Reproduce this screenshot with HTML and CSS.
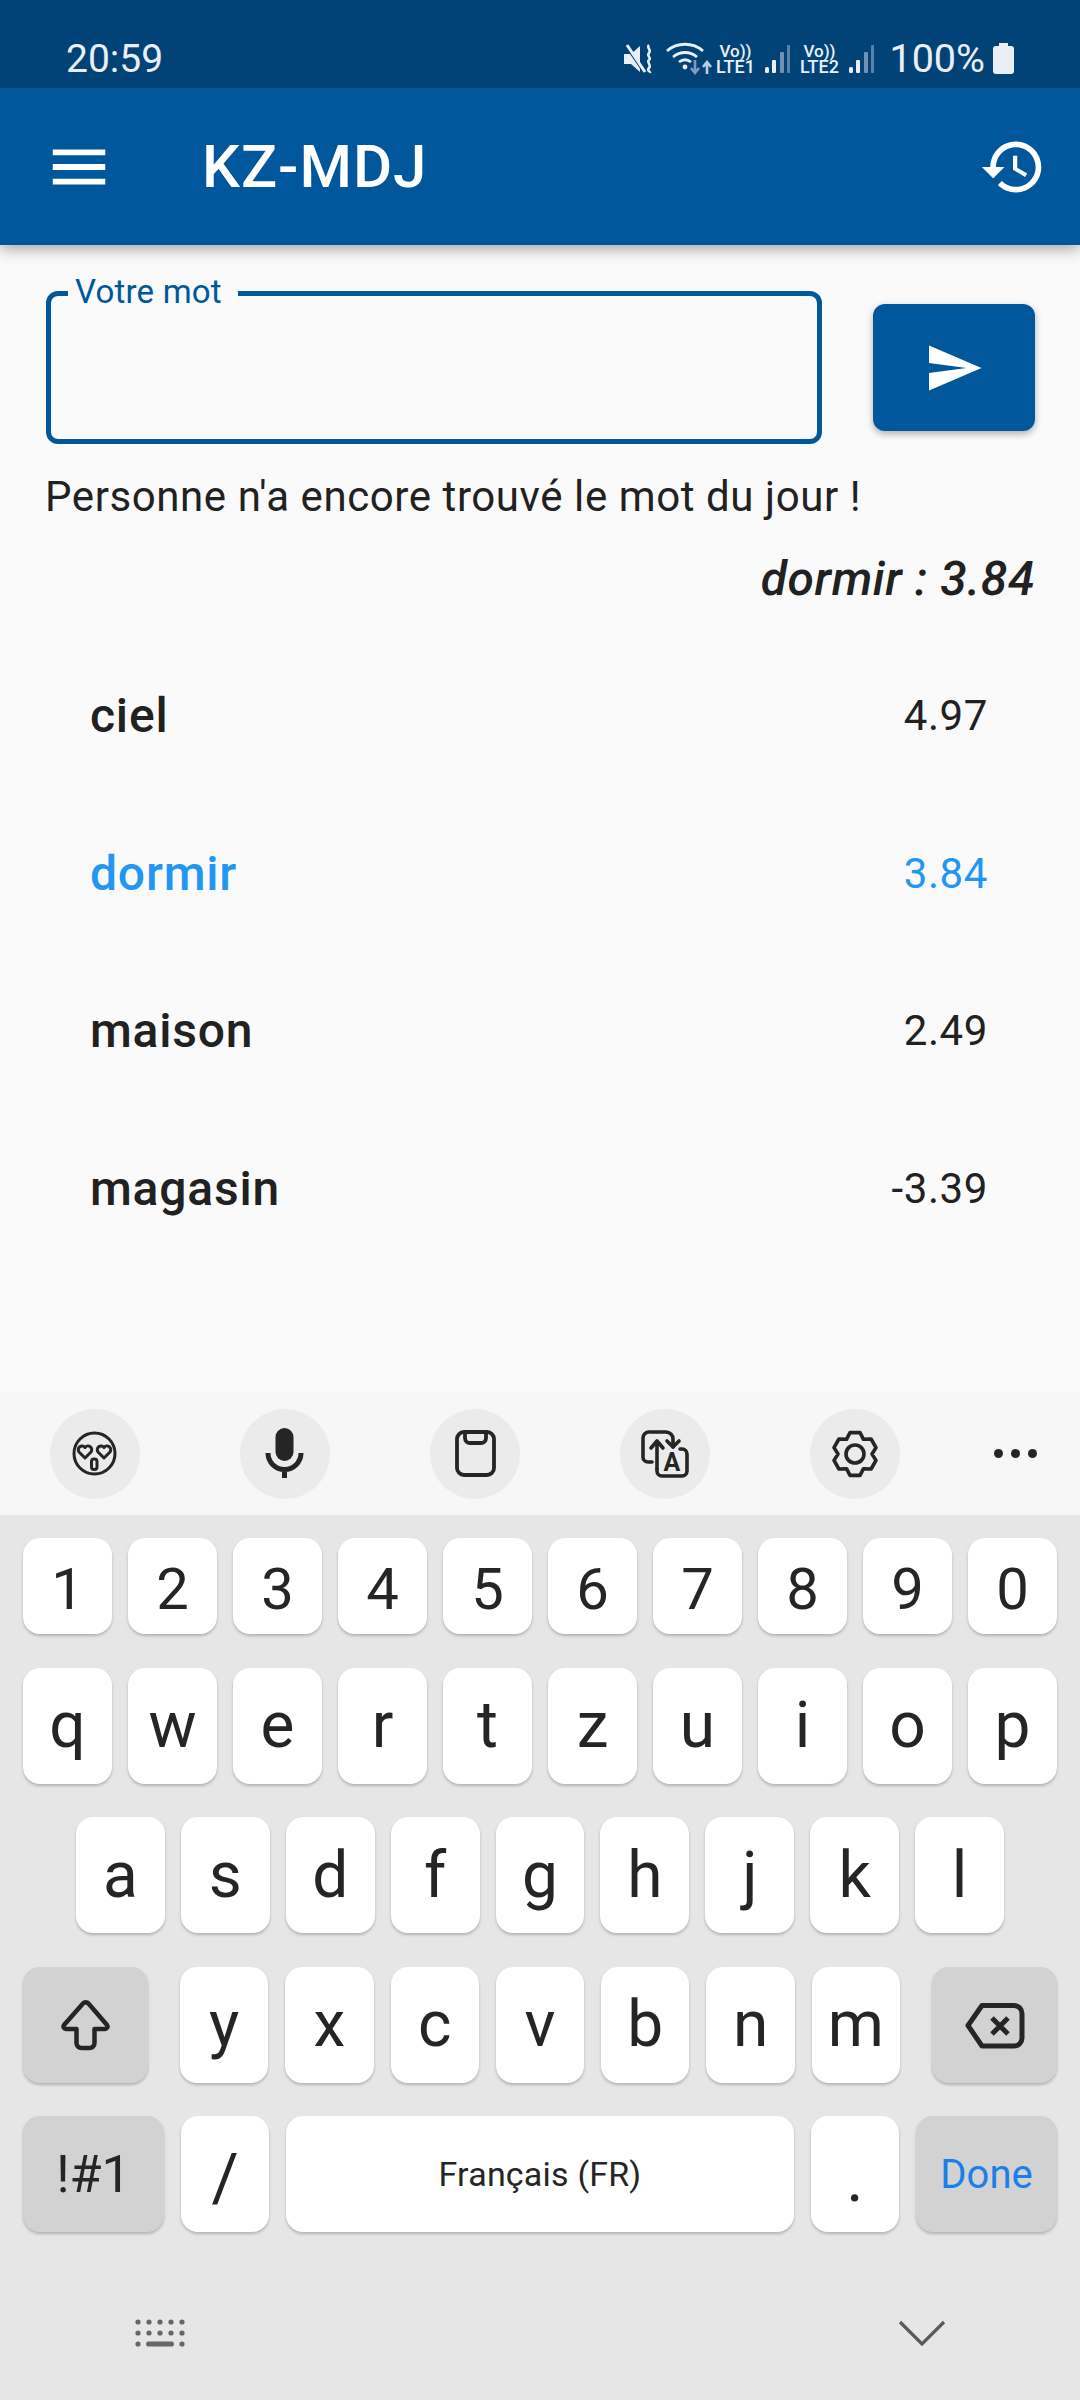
FILE: index.html
```html
<!DOCTYPE html>
<html lang="fr">
<head>
<meta charset="utf-8">
<title>KZ-MDJ</title>
<link rel="stylesheet" href="styles.css">
</head>
<body>
<div class="page">
  <div class="status">
    <span class="time">20:59</span>
    <div class="status-right">
      <svg class="st-mute" width="32" height="32" viewBox="0 0 32 32"><path d="M1 11h7L17 3v26l-9-8H1z" fill="#e9eff4"/><path d="M2 1l19 28" stroke="#014377" stroke-width="3"/><path d="M4 2l18 27" stroke="#e9eff4" stroke-width="3"/><path d="M26 2c-3 3 3 5 0 8s3 5 0 7 3 5 0 8 2 3 1 5" fill="none" stroke="#e9eff4" stroke-width="2.5"/></svg>
      <svg class="st-wifi" width="46" height="34" viewBox="0 0 46 34"><g fill="none" stroke="#e9eff4" stroke-width="2.8"><path d="M1 9c10-9 26-9 36 0"/><path d="M7 15c7-6 17-6 24 0"/></g><path d="M13 20c4-3 8-3 12 0" fill="none" stroke="#e9eff4" stroke-width="2.8"/><circle cx="19" cy="25" r="2.4" fill="#e9eff4"/><path d="M29 18v12m-4-4l4 5 4-5" fill="none" stroke="#7e9ebb" stroke-width="2.6"/><path d="M41 32v-11m-4 4l4-5 4 5" fill="none" stroke="#bccddb" stroke-width="2.6"/></svg>
      <div class="volte"><span class="vo">Vo))</span><span class="lte">LTE1</span></div>
      <svg class="st-sig" width="26" height="30" viewBox="0 0 26 30"><rect x="1" y="23" width="4" height="6" rx="1.5" fill="#e9eff4"/><rect x="8" y="16" width="4" height="13" rx="1" fill="#e9eff4"/><rect x="16" y="8" width="4" height="21" rx="1" fill="#6f93b4"/><rect x="23" y="1" width="3.500" height="28" rx="1" fill="#5b82a6"/></svg>
      <div class="volte"><span class="vo">Vo))</span><span class="lte">LTE2</span></div>
      <svg class="st-sig" width="26" height="30" viewBox="0 0 26 30"><rect x="1" y="23" width="4" height="6" rx="1.5" fill="#e9eff4"/><rect x="8" y="16" width="4" height="13" rx="1" fill="#e9eff4"/><rect x="16" y="8" width="4" height="21" rx="1" fill="#6f93b4"/><rect x="23" y="1" width="3.500" height="28" rx="1" fill="#5b82a6"/></svg>
      <span class="pct">100%</span>
      <svg class="st-bat" width="21" height="31" viewBox="0 0 21 31"><path d="M6 0h9v3h3a3 3 0 0 1 3 3v22a3 3 0 0 1-3 3H3a3 3 0 0 1-3-3V6a3 3 0 0 1 3-3h3z" fill="#e9eff4"/></svg>
    </div>
  </div>

  <header class="appbar">
    <svg class="ic-menu" width="70" height="70" viewBox="0 0 24 24"><path d="M3 18h18v-2H3v2zm0-5h18v-2H3v2zm0-7v2h18V6H3z" fill="#fff"/></svg>
    <h1 class="title">KZ-MDJ</h1>
    <svg class="ic-history" width="68" height="68" viewBox="0 0 24 24"><path d="M13 3c-4.97 0-9 4.03-9 9H1l3.89 3.89.07.14L9 12H6c0-3.87 3.13-7 7-7s7 3.13 7 7-3.13 7-7 7c-1.93 0-3.68-.79-4.94-2.06l-1.42 1.42C8.27 19.99 10.51 21 13 21c4.97 0 9-4.03 9-9s-4.03-9-9-9zm-1 5v5l4.28 2.54.72-1.21-3.5-2.08V8H12z" fill="#fff"/></svg>
  </header>

  <main class="main">
    <div class="form">
      <div class="field"><span class="field-label">Votre mot</span></div>
      <button class="send" type="button"><svg width="60" height="60" viewBox="0 0 24 24"><path d="M2.01 21L23 12 2.01 3 2 10l15 2-15 2z" fill="#fff"/></svg></button>
    </div>
    <p class="info">Personne n'a encore trouvé le mot du jour !</p>
    <p class="score">dormir : 3.84</p>
    <ul class="list">
      <li class="row"><span class="word">ciel</span><span class="val">4.97</span></li>
      <li class="row hit"><span class="word">dormir</span><span class="val">3.84</span></li>
      <li class="row"><span class="word">maison</span><span class="val">2.49</span></li>
      <li class="row"><span class="word">magasin</span><span class="val">-3.39</span></li>
    </ul>
  </main>

  <section class="kbd">
    <div class="tools">
      <span class="tool"><svg width="90" height="90" viewBox="0 0 90 90"><g fill="none" stroke="#252525" stroke-width="3" stroke-linejoin="round"><circle cx="44.5" cy="44.5" r="20.5"/><path d="M35 49l-6-6a3.700 3.700 0 0 1 6-4.500 3.700 3.700 0 0 1 6 4.500z"/><path d="M54 49l-6-6a3.700 3.700 0 0 1 6-4.500 3.700 3.700 0 0 1 6 4.500z"/><rect x="41.500" y="50" width="5.500" height="10.500" rx="2.500"/></g></svg></span>
      <span class="tool"><svg width="90" height="90" viewBox="0 0 90 90"><rect x="35.500" y="19" width="18" height="33" rx="9" fill="#252525"/><path d="M28 44a16.500 16.500 0 0 0 33 0M44.500 60v9" fill="none" stroke="#252525" stroke-width="5"/></svg></span>
      <span class="tool"><svg width="90" height="90" viewBox="0 0 90 90"><g fill="none" stroke="#252525" stroke-width="3.800"><rect x="27" y="23" width="37" height="43" rx="7"/><path d="M35 23v6a5 5 0 0 0 5 5h11a5 5 0 0 0 5-5v-6"/></g></svg></span>
      <span class="tool"><svg width="90" height="90" viewBox="0 0 90 90"><g fill="none" stroke="#252525" stroke-width="3.600" stroke-linecap="round" stroke-linejoin="round"><path d="M32 53h-4a5 5 0 0 1-5-5V29a6 6 0 0 1 6-6h17a7 7 0 0 1 7 7v8"/><path d="M47 32l6 6 6-6"/><path d="M37 60V33m-6 6l6-7 6 7"/><path d="M60 40h2a5 5 0 0 1 5 5v17a5 5 0 0 1-5 5H42a5 5 0 0 1-5-5v-2"/></g><text class="tool-a" x="52" y="62" text-anchor="middle">A</text></svg></span>
      <span class="tool"><svg width="90" height="90" viewBox="0 0 90 90"><path d="M50 23.600H40L36.500 30.300 28.900 30 24 38.600 28 45 24 51.400 28.900 60 36.500 59.700 40 66.400H50L53.500 59.700 61.100 60 66 51.400 62 45 66 38.600 61.100 30 53.500 30.300Z" fill="none" stroke="#252525" stroke-width="3.600" stroke-linejoin="round"/><circle cx="45" cy="45" r="9" fill="none" stroke="#252525" stroke-width="3.600"/></svg></span>
      <span class="tool-more"><i class="dot"></i><i class="dot"></i><i class="dot"></i></span>
    </div>

    <div class="keys">
      <div class="krow num">
        <span class="key">1</span><span class="key">2</span><span class="key">3</span><span class="key">4</span><span class="key">5</span><span class="key">6</span><span class="key">7</span><span class="key">8</span><span class="key">9</span><span class="key">0</span>
      </div>
      <div class="krow">
        <span class="key">q</span><span class="key">w</span><span class="key">e</span><span class="key">r</span><span class="key">t</span><span class="key">z</span><span class="key">u</span><span class="key">i</span><span class="key">o</span><span class="key">p</span>
      </div>
      <div class="krow inset">
        <span class="key">a</span><span class="key">s</span><span class="key">d</span><span class="key">f</span><span class="key">g</span><span class="key">h</span><span class="key">j</span><span class="key">k</span><span class="key">l</span>
      </div>
      <div class="krow wide-gap">
        <span class="key fn w125 before"><svg width="125" height="116" viewBox="0 0 125 116"><path d="M60 36.500a3.500 3.500 0 0 1 5.500 0L84 58a2.500 2.500 0 0 1-2 4H71.500V76a5 5 0 0 1-5 5H58.500a5 5 0 0 1-5-5V62H43a2.500 2.500 0 0 1-2-4Z" fill="none" stroke="#252525" stroke-width="4.500" stroke-linejoin="round"/></svg></span>
        <span class="key">y</span><span class="key">x</span><span class="key">c</span><span class="key">v</span><span class="key">b</span><span class="key">n</span><span class="key">m</span>
        <span class="key fn w125 after"><svg width="125" height="116" viewBox="0 0 125 116"><path d="M50 38.500H82a8 8 0 0 1 8 8V71a8 8 0 0 1-8 8H50L36 58.500Z" fill="none" stroke="#252525" stroke-width="5" stroke-linejoin="round"/><path d="M60 51l16 16M76 51L60 67" fill="none" stroke="#252525" stroke-width="5"/></svg></span>
      </div>
      <div class="krow wide-gap">
        <span class="key fn w141 sym">!#1</span>
        <span class="key low">/</span>
        <span class="key space">Français (FR)</span>
        <span class="key low">.</span>
        <span class="key fn w141 done">Done</span>
      </div>
    </div>

    <div class="navrow">
      <svg width="56" height="34" viewBox="0 0 56 34"><g fill="#666"><circle cx="4" cy="5" r="2.600"/><circle cx="15" cy="5" r="2.600"/><circle cx="26" cy="5" r="2.600"/><circle cx="37" cy="5" r="2.600"/><circle cx="48" cy="5" r="2.600"/><circle cx="4" cy="16" r="2.600"/><circle cx="15" cy="16" r="2.600"/><circle cx="26" cy="16" r="2.600"/><circle cx="37" cy="16" r="2.600"/><circle cx="48" cy="16" r="2.600"/><circle cx="4" cy="27" r="2.600"/><rect x="12" y="24.500" width="28" height="5" rx="2.500"/><circle cx="48" cy="27" r="2.600"/></g></svg>
      <svg width="48" height="28" viewBox="0 0 48 28"><path d="M2 2l22 22L46 2" fill="none" stroke="#5a5a5a" stroke-width="3.200"/></svg>
    </div>
  </section>
</div>
</body>
</html>
```
FILE: styles.css
```css
* { box-sizing: border-box; }
html, body { margin: 0; padding: 0; }
body { font-family: Roboto, "Liberation Sans", sans-serif; color: #212121; background: #fafafa; }
.page { width: 1080px; height: 2400px; display: flex; flex-direction: column; overflow: hidden; }

/* Status bar */
.status { height: 88px; flex: none; background: #014377; color: #e9eff4; display: flex; align-items: center; justify-content: space-between; padding: 29px 66px 0 66px; position: relative; z-index: 2; }
.time { font-size: 39px; }
.status-right { display: flex; align-items: center; }
.st-mute { margin-right: 11px; }
.st-wifi { margin-right: 3px; }
.volte { width: 40px; margin-top: 1px; display: flex; flex-direction: column; text-align: center; font-weight: 500; }
.vo { font-size: 17px; line-height: 16px; }
.lte { font-size: 18px; line-height: 16px; }
.st-sig { margin: 0 9px; }
.pct { font-size: 39.5px; margin-left: 6px; margin-right: 8px; }

/* App bar */
.appbar { height: 157px; flex: none; background: #01579b; color: #fff; display: flex; align-items: center; padding: 0 33px 0 44px; box-shadow: 0 4px 14px rgba(0, 0, 0, .35); position: relative; z-index: 1; }
.title { font-size: 60px; font-weight: 500; letter-spacing: 1px; margin: 0 0 0 88px; flex: 1; }
.ic-menu, .ic-history { flex: none; }

/* Main */
.main { flex: 1; padding: 46px 45px 0 46px; min-height: 0; }
.form { display: flex; align-items: flex-start; gap: 51px; }
.field { position: relative; width: 776px; height: 153px; border: 5px solid #01579b; border-radius: 12px; background: #fafafa; }
.field-label { position: absolute; left: 17px; top: -26px; padding: 0 16px 0 7px; background: #fafafa; color: #01579b; font-size: 33px; letter-spacing: .2px; line-height: 44px; }
.send { margin-top: 13px; width: 162px; height: 127px; border: 0; padding: 0; border-radius: 12px; background: #01579b; display: flex; align-items: center; justify-content: center; box-shadow: 0 3px 7px rgba(0, 0, 0, .3); }
.info { margin: 28px 0 0 -1px; font-size: 42px; letter-spacing: .58px; line-height: 50px; }
.score { margin: 29px 0 0; text-align: right; font-size: 48px; letter-spacing: .6px; line-height: 56px; font-style: italic; font-weight: 500; }
.list { list-style: none; margin: 30px 0 0; padding: 0 47px 0 44px; }
.row { height: 157.5px; display: flex; align-items: center; justify-content: space-between; }
.word { font-size: 48px; font-weight: 500; letter-spacing: .8px; }
.val { font-size: 42px; letter-spacing: .6px; }
.hit { color: #2196f3; }

/* Keyboard */
.kbd { flex: none; height: 1008px; background: #e6e6e6; display: flex; flex-direction: column; }
.tools { height: 123px; flex: none; background: #f7f7f7; display: flex; align-items: center; padding: 0 0 0 50px; gap: 100px; }
.tool { width: 90px; height: 90px; border-radius: 50%; background: #ebebeb; display: block; }
.tool svg { display: block; }
.tool-a { font-family: Roboto, sans-serif; font-size: 25px; font-weight: 700; fill: #252525; }
.tool-more { display: flex; gap: 8px; margin-left: -6px; }
.dot { display: block; width: 9px; height: 9px; border-radius: 50%; background: #252525; }

.keys { padding: 23px 23px 0; display: flex; flex-direction: column; gap: 33.5px; }
.krow { display: flex; gap: 16px; height: 116px; }
.krow.num { height: 96px; }
.krow.inset { padding: 0 53px; }
.krow.wide-gap { gap: 17px; }
.key { flex: 1 1 0; min-width: 0; display: flex; align-items: center; justify-content: center; background: #fff; border-radius: 17px; box-shadow: 0 2px 3px rgba(0, 0, 0, .22); font-size: 64px; color: #252525; }
.num .key { font-size: 58px; padding-top: 6px; }
.fn { background: #d2d2d2; flex: none; }
.w125 { width: 125px; }
.w141 { width: 141px; }
.before { margin-right: 15px; }
.after { margin-left: 15px; }
.key svg { display: block; }
.sym { font-size: 52px; }
.low { padding-top: 8px; font-size: 66px; }
.space { flex: none; width: 508px; font-size: 34px; letter-spacing: .2px; }
.done { font-size: 40px; color: #1a7fe8; }

.navrow { flex: 1; display: flex; justify-content: space-between; align-items: center; padding: 36px 134px 0 134px; }
```
